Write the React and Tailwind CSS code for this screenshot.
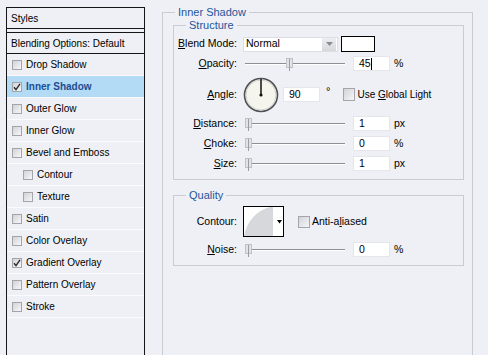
import React from "react";

const styles = [
  { name: "Drop Shadow" },
  { name: "Inner Shadow", checked: true, active: true },
  { name: "Outer Glow" },
  { name: "Inner Glow" },
  { name: "Bevel and Emboss" },
  { name: "Contour", indent: true },
  { name: "Texture", indent: true },
  { name: "Satin" },
  { name: "Color Overlay" },
  { name: "Gradient Overlay", checked: true },
  { name: "Pattern Overlay" },
  { name: "Stroke" },
];

const CheckBox = ({ checked, size = "w-[10px] h-[10px]" }) => (
  <span
    className={`${size} shrink-0 border border-[#a3a5ab] bg-gradient-to-br from-[#d2d3d7] to-[#f7f7f9] flex items-center justify-center`}
  >
    {checked && (
      <svg width="8" height="8" viewBox="0 0 8 8">
        <path d="M1 4.2 L3 6.6 L7 0.8" fill="none" stroke="#2a2a2a" strokeWidth="1.4" />
      </svg>
    )}
  </span>
);

const Key = ({ children }) => <span className="underline underline-offset-[1px]">{children}</span>;

const Label = ({ children }) => (
  <span className="w-[64px] shrink-0 text-right pr-[1px]">{children}</span>
);

const Field = ({ value, caret }) => (
  <span className="w-[37px] h-[15px] shrink-0 bg-white border border-[#e4e6ec] pl-[5px] leading-[13px] flex items-center">
    {value}
    {caret && <span className="w-px h-[12px] bg-black" />}
  </span>
);

// track with the little tab handle sitting on it
const Slider = ({ at }) => (
  <span className="relative w-[102px] h-full shrink-0 flex items-center pl-[2px]">
    <span className="w-full h-[2px] border-t border-[#8d8f95] border-b border-b-white" />
    <span
      className="absolute top-[2px] w-[7px] h-[10px] bg-[#e2e3e7] border border-[#bfc1c7] flex justify-center"
      style={{ left: at }}
    >
      <span className="w-px h-[12px] bg-[#9a9ca2]" />
    </span>
  </span>
);

const AngleDial = () => (
  <svg width="36" height="36" viewBox="0 0 36 36" className="shrink-0">
    <circle cx="18" cy="18" r="16.5" fill="#f5f5ee" stroke="#4e5056" strokeWidth="1.6" />
    <circle cx="18" cy="18" r="15" fill="none" stroke="#c8c9c4" strokeWidth="0.8" />
    <line x1="18" y1="18" x2="18" y2="2" stroke="#111" strokeWidth="1.5" />
    <circle cx="18" cy="18" r="1.6" fill="#111" />
  </svg>
);

const ContourPicker = () => (
  <span className="w-[41px] h-[31px] shrink-0 border border-black bg-white">
    <svg width="39" height="29" viewBox="0 0 39 29">
      <path d="M0 29 C3 14 12 4 26 0 L29 0 L29 29 Z" fill="#d7d8dc" />
      <path d="M33 13 L38 13 L35.5 16.5 Z" fill="#000" />
    </svg>
  </span>
);

const Group = ({ title, children, className = "" }) => (
  <fieldset className={`border border-[#c9ccd4] min-w-0 ${className}`}>
    <legend className="ml-[12px] px-[3px] text-[11px] leading-[13px] text-[#1f569b]">{title}</legend>
    {children}
  </fieldset>
);

export default function App() {
  return (
    <div className="w-[488px] h-[355px] overflow-hidden bg-[#eef0f5] flex items-start font-['Liberation_Sans',Arial,sans-serif] text-black">
      <aside className="ml-[6px] mt-[7px] w-[139px] h-[360px] shrink-0 border border-[#151515] text-[10px]">
        <div className="h-[21px] pl-[4px] flex items-center border-b border-[#151515]">Styles</div>
        <div className="h-[3px]" />
        <div className="h-[22px] pl-[4px] flex items-center border-y border-[#151515]">
          Blending Options: Default
        </div>
        {styles.map((s) => (
          <div
            key={s.name}
            className={`h-[22px] flex items-center gap-[4px] border-b border-[#fbfbfd] ${
              s.indent ? "pl-[16px]" : "pl-[5px]"
            } ${s.active ? "bg-[#b4dbf6] font-bold text-[#1c4d92]" : ""}`}
          >
            <CheckBox checked={s.checked} />
            <span>{s.name}</span>
          </div>
        ))}
      </aside>

      <div className="ml-[17px] mt-[6px] w-[311px] shrink-0 text-[10.5px]">
        <Group title="Inner Shadow" className="h-[360px]">
          <div className="pl-[10px] pr-[8px]">
            <Group title="Structure">
              <div className="pt-[4px] pb-[8px] flex flex-col">
                <div className="h-[16px] flex items-center gap-[5px]">
                  <Label>
                    <Key>B</Key>lend Mode:
                  </Label>
                  <span className="w-[95px] h-[15px] bg-white border border-[#dcdee4] flex items-center">
                    <span className="flex-1 pl-[2px]">Normal</span>
                    <span className="w-[14px] h-[13px] mr-px bg-gradient-to-b from-[#eceef1] to-[#d6d8dc] flex items-center justify-center">
                      <svg width="7" height="4" viewBox="0 0 7 4">
                        <path d="M0 0 L7 0 L3.5 4 Z" fill="#8a8c92" />
                      </svg>
                    </span>
                  </span>
                  <span className="ml-[-2px] w-[34px] h-[16px] border border-black bg-white" />
                </div>

                <div className="mt-[4px] h-[15px] flex items-center gap-[5px]">
                  <Label>
                    <Key>O</Key>pacity:
                  </Label>
                  <Slider at="43px" />
                  <span className="ml-[3px]">
                    <Field value="45" caret />
                  </span>
                  <span className="ml-[-1px]">%</span>
                </div>

                <div className="mt-[6px] h-[35px] flex items-center gap-[5px]">
                  <Label>
                    <Key>A</Key>ngle:
                  </Label>
                  <AngleDial />
                  <span className="ml-[-1px]">
                    <Field value="90" />
                  </span>
                  <span className="ml-[1px] mb-[6px] text-[11px]">°</span>
                  <span className="ml-[8px] flex items-center gap-[2px]">
                    <CheckBox size="w-[12px] h-[13px]" />
                    <span className="text-[10px]">
                      Use <Key>G</Key>lobal Light
                    </span>
                  </span>
                </div>

                {[
                  ["D", "istance:", "1", "px"],
                  ["C", "hoke:", "0", "%"],
                  ["S", "ize:", "1", "px"],
                ].map(([k, rest, v, unit], i) => (
                  <div key={rest} className={`${i ? "mt-[5px]" : "mt-[4px]"} h-[15px] flex items-center gap-[5px]`}>
                    <Label>
                      <Key>{k}</Key>
                      {rest}
                    </Label>
                    <Slider at="2px" />
                    <span className="ml-[3px]">
                      <Field value={v} />
                    </span>
                    <span className="ml-[-1px]">{unit}</span>
                  </div>
                ))}
              </div>
            </Group>

            <Group title="Quality" className="mt-[9px]">
              <div className="pt-[4px] pb-[8px] flex flex-col">
                <div className="h-[31px] flex items-center gap-[5px]">
                  <Label>Contour:</Label>
                  <ContourPicker />
                  <span className="ml-[9px] flex items-center gap-[2px]">
                    <CheckBox size="w-[12px] h-[12px]" />
                    <span>
                      Anti-a<Key>l</Key>iased
                    </span>
                  </span>
                </div>
                <div className="mt-[5px] h-[15px] flex items-center gap-[5px]">
                  <Label>
                    <Key>N</Key>oise:
                  </Label>
                  <Slider at="2px" />
                  <span className="ml-[3px]">
                    <Field value="0" />
                  </span>
                  <span className="ml-[-1px]">%</span>
                </div>
              </div>
            </Group>
          </div>
        </Group>
      </div>
    </div>
  );
}
